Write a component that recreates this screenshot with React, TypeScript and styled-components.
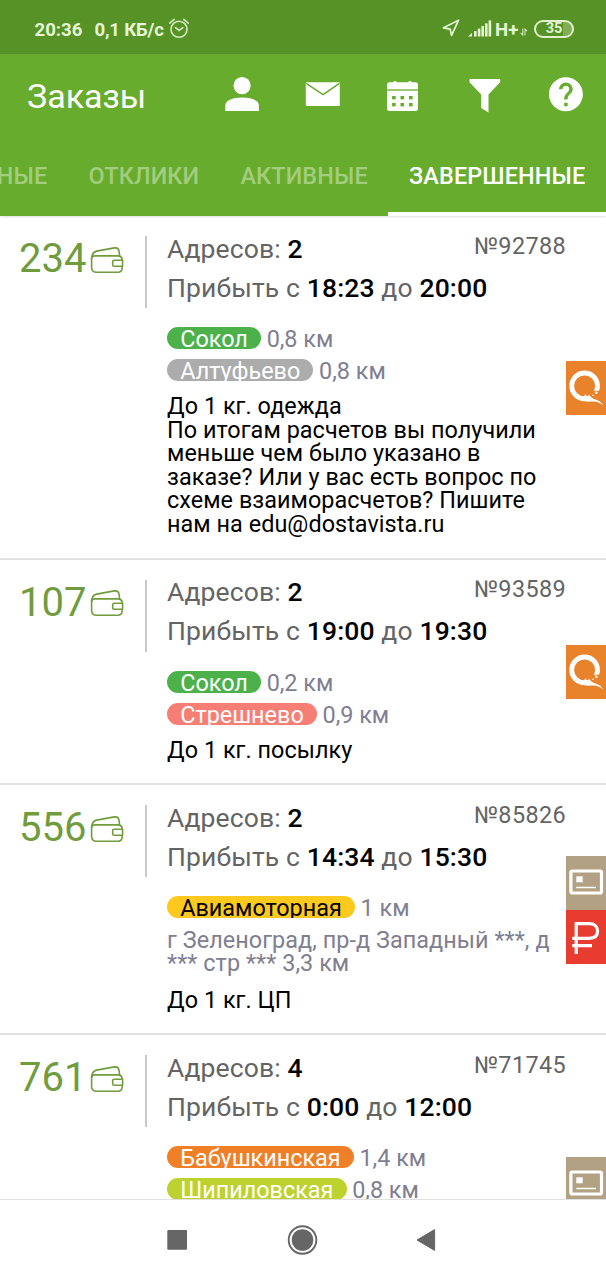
import React from 'react';
import styled, { createGlobalStyle } from 'styled-components';

const GlobalStyle = createGlobalStyle`
  * { box-sizing: border-box; }
  body { margin: 0; background: #fff; }
  svg { display: block; flex: none; }
`;

const Screen = styled.div`
  width: 606px;
  height: 1280px;
  overflow: hidden;
  display: flex;
  flex-direction: column;
  background: #fff;
  font-family: Roboto, 'Noto Sans', sans-serif;
`;

/* ---------- status bar ---------- */

const StatusBar = styled.div`
  flex: none;
  height: 54px;
  padding: 6px 32px 0 34.5px;
  display: flex;
  align-items: center;
  background: #579227;
  color: #e4f6d3;
  font-size: 18.6px;
  font-weight: 700;
  line-height: 22px;
`;

const Clock = styled.span`
  width: 60px;
`;

const Speed = styled.span`
  width: 74.5px;
  white-space: nowrap;
  letter-spacing: -0.2px;
`;

const StatusRight = styled.div`
  margin-left: auto;
  display: flex;
  align-items: center;
`;

const Network = styled.span`
  margin-left: 3.5px;
  width: 25px;
`;

const Battery = styled.div`
  margin: -3px 0 0 6px;
  width: 40px;
  height: 18px;
  border: 2px solid #dff2cd;
  border-radius: 9px;
  display: flex;
  align-items: center;
  justify-content: center;
  font-size: 14.5px;
  line-height: 14px;
  padding-top: 1px;
  background: linear-gradient(90deg, transparent 0 27px, #7fae56 27px);
  background-clip: padding-box;
`;

/* ---------- app bar ---------- */

const Header = styled.header`
  flex: none;
  height: 162px;
  background: #67ac2c;
  color: #fff;
  display: flex;
  flex-direction: column;
  box-shadow: 0 1px 2px rgba(0, 0, 0, 0.12);
`;

const AppBar = styled.div`
  height: 82px;
  display: flex;
  align-items: center;
`;

const Title = styled.h1`
  margin: 0 0 -2px;
  padding-left: 27px;
  width: 202px;
  font-size: 34px;
  font-weight: 400;
  line-height: 40px;
`;

const Action = styled.div`
  width: 80.8px;
  display: flex;
  justify-content: center;
`;

const Tabs = styled.nav`
  height: 80px;
  display: flex;
  justify-content: flex-end;
  overflow: hidden;
`;

const Tab = styled.div<{ $active?: boolean }>`
  flex: none;
  display: flex;
  align-items: center;
  padding: 4px 20.6px 0;
  border-bottom: 4px solid ${p => (p.$active ? '#fff' : 'transparent')};
  color: ${p => (p.$active ? '#fff' : '#a3cd7e')};
  font-size: 23.4px;
  font-weight: 500;
  letter-spacing: 0.15px;
`;

/* ---------- order list ---------- */

const List = styled.main`
  flex: 1;
  min-height: 0;
  overflow: hidden;
`;

const OrderRow = styled.article<{ $minHeight?: number }>`
  display: grid;
  grid-template-columns: 145px 2px 1fr 40px;
  min-height: ${p => p.$minHeight ?? 0}px;
  background: linear-gradient(#e2e2e2, #e2e2e2) bottom / 100% 2px no-repeat;
`;

const Price = styled.div`
  padding: 19px 0 0 19px;
  display: flex;
  align-items: flex-start;
  gap: 4px;
  color: #719c3e;
  font-size: 40px;
  line-height: 48px;

  svg { margin-top: 11.5px; }
`;

const Separator = styled.div`
  margin-top: 20px;
  height: 72px;
  width: 1.5px;
  background: #c9c9c9;
`;

const Details = styled.div`
  padding: 12.6px 0 23px 20px;
  min-width: 0;
`;

const HeadLine = styled.div`
  display: flex;
  justify-content: space-between;
  height: 39.3px;
  line-height: 39.3px;
  font-size: 26.5px;
  letter-spacing: 0.13px;
  color: #646464;
  white-space: pre;

  b { font-weight: 500; color: #000; }
`;

const OrderNumber = styled.span`
  margin-top: -2px;
  font-size: 23.4px;
  letter-spacing: 0.38px;
`;

const Stops = styled.div`
  margin-top: 19.8px;
  display: flex;
  flex-direction: column;
  gap: 10px;
`;

const Stop = styled.div`
  height: 22px;
  display: flex;
  align-items: flex-start;
  gap: 5.6px;
  font-size: 23.4px;
  line-height: 25px;
  color: #807e90;
`;

const Station = styled.span<{ $bg: string; $dark?: boolean }>`
  height: 22px;
  padding: 0 13.2px;
  border-radius: 11px;
  overflow: hidden;
  background: ${p => p.$bg};
  color: ${p => (p.$dark ? '#000' : '#fff')};
`;

const Address = styled.div`
  margin-bottom: -1.2px;
  padding-top: 0.6px;
  font-size: 23.4px;
  line-height: 23.6px;
  letter-spacing: 0.06px;
  white-space: pre-line;
  color: #807e90;
`;

const Note = styled.p`
  margin: 14px 0 0;
  font-size: 23.4px;
  line-height: 23.6px;
  letter-spacing: 0.05px;
  white-space: pre-line;
  color: #000;
`;

const Badges = styled.div`
  align-self: center;
  display: flex;
  flex-direction: column;
`;

const Badge = styled.div<{ $bg: string }>`
  height: 54px;
  background: ${p => p.$bg};
`;

/* ---------- system navigation ---------- */

const NavBar = styled.footer`
  flex: none;
  height: 81px;
  padding: 0 0 0 157px;
  display: flex;
  align-items: center;
  gap: 85px;
  border-top: 1px solid #e0e0e0;
  background: #fff;
`;

/* ---------- icons ---------- */

const RaisedSvg = styled.svg`
  margin-top: -4px;
`;

const AlarmIcon = () => (
  <RaisedSvg width="20" height="21" viewBox="0 0 20 21" fill="none" stroke="#d5ecbf" strokeWidth="1.6">
    <circle cx="10" cy="11.3" r="8" />
    <path d="M6.6 9.6 10 12.4l3.8-2.8M.8 5.2 5.2 1.4M19.2 5.2l-4.4-3.8" strokeLinecap="round" />
  </RaisedSvg>
);

const LocationIcon = () => (
  <RaisedSvg width="18" height="18" viewBox="0 0 18 18" fill="none" stroke="#e4f6d3" strokeWidth="1.7" strokeLinejoin="round">
    <path d="M16.6 1.2 1.4 8.8l6.8 1.4 1.4 6.2z" />
  </RaisedSvg>
);

const SignalSvg = styled.svg`
  margin: -3px 0 0 8px;
`;

const SignalIcon = () => (
  <SignalSvg width="24" height="17" viewBox="0 0 24 17" fill="#e4f6d3">
    <path d="M0 16.5 4 13v3.5z" />
    <rect x="6" y="11" width="2.6" height="5.5" />
    <rect x="9.8" y="8.6" width="2.6" height="7.9" />
    <rect x="13.4" y="6" width="2.6" height="10.5" />
    <rect x="17" y="3.4" width="2.6" height="13.1" />
    <rect x="20.6" y=".4" width="2.6" height="16.1" />
  </SignalSvg>
);

const DataSvg = styled.svg`
  margin-top: 4px;
`;

const DataIcon = () => (
  <DataSvg width="8" height="8" viewBox="0 0 8 8" fill="none" stroke="#cfe8b8" strokeWidth="1.1">
    <path d="M2.8.5v6.5L.6 4.8M5 7.6V1.2l2.2 2" />
  </DataSvg>
);

const PersonIcon = () => (
  <svg width="48" height="48" viewBox="0 0 48 48" fill="#fff">
    <circle cx="24.1" cy="14.7" r="8.6" />
    <path d="M7.3 40v-5.6c0-4.8 7-8 16.8-8s16.8 3.2 16.8 8V40z" />
  </svg>
);

const MailIcon = () => (
  <svg width="48" height="48" viewBox="0 0 48 48">
    <rect x="6.8" y="11.2" width="34" height="23.8" rx="1" fill="#fff" />
    <path d="M7.2 12.4 24.1 23.6 40.4 12.4" fill="none" stroke="#67ac2c" strokeWidth="1.5" />
  </svg>
);

const CalendarIcon = () => (
  <svg width="48" height="48" viewBox="0 0 48 48">
    <rect x="7" y="11.3" width="31" height="28.7" rx="2.5" fill="#fff" />
    <rect x="13.2" y="10" width="3.6" height="4" rx="1.6" fill="#fff" />
    <rect x="28.2" y="10" width="3.6" height="4" rx="1.6" fill="#fff" />
    <path d="M7 19h31" stroke="#67ac2c" strokeWidth="1.3" />
    <g fill="#67ac2c">
      {[25, 32].map(y => [12.1, 20.5, 29].map(x => <rect key={`${x}-${y}`} x={x} y={y} width="3.6" height="3.4" />))}
    </g>
  </svg>
);

const FilterIcon = () => (
  <svg width="48" height="48" viewBox="0 0 48 48" fill="#fff">
    <path d="M8.5 8h30.7v3.2L27.5 23.6v17.8L20.2 37V23.6L8.5 11.2z" />
  </svg>
);

const HelpIcon = () => (
  <svg width="48" height="48" viewBox="0 0 48 48" fill="#fff">
    <path
      transform="translate(3.5 2.9) scale(1.7)"
      d="M12 2C6.48 2 2 6.48 2 12s4.48 10 10 10 10-4.48 10-10S17.52 2 12 2zm1 17h-2v-2h2v2zm2.07-7.75l-.9.92C13.45 12.9 13 13.5 13 15h-2v-.5c0-1.1.45-2.1 1.17-2.83l1.24-1.26c.37-.36.59-.86.59-1.41 0-1.1-.9-2-2-2s-2 .9-2 2H8c0-2.21 1.79-4 4-4s4 1.79 4 4c0 .88-.36 1.68-.93 2.25z"
    />
  </svg>
);

const WalletIcon = () => (
  <svg width="34" height="27" viewBox="0 0 34 27" fill="none" stroke="#719c3e" strokeWidth="1.6" strokeLinejoin="round">
    <path d="M1.6 12v8.2c0 3.2 1.8 5 5 5h21c3 0 4.6-1.7 4.6-4.7v-1.3M32.2 13.2c0-2.8-1.5-4.3-4.6-4.3H4.8c-2 0-3.2 1.2-3.2 3.1" />
    <path d="M1.6 12c0-4.8 1.4-7 5-7.9L24.4.9c2.6-.4 4.3 1 4.7 3.500l.5 4.600" />
    <path d="M32.600 13.200h-8.600c-.8 0-1.300.5-1.300 1.300v3.400c0 .8.5 1.300 1.300 1.300h8.600z" />
  </svg>
);

const QiwiIcon = () => (
  <svg width="40" height="54" viewBox="0 0 40 54">
    <circle cx="18.600" cy="24.900" r="12.900" fill="none" stroke="#fff" strokeWidth="4.800" />
    <path d="M22 33.500 27 30 34.800 29.500 36 38 27 38z" fill="#e8832c" />
    <path d="M15 39.500 16 35.500c2 0 3-.6 3-2.500 1 1.600 2 2.400 3.600 2.800l.4-2.300c1.300 2.700 3.200 4 6.500 5 3.600 1.200 6.200 3 7.900 6-3.400-2.600-6.400-3.900-10.200-3.900-4.500 0-8.700.4-12.200-1.100z" fill="#fff" />
    <circle cx="30.300" cy="31.800" r="1.300" fill="#fff" />
    <circle cx="27" cy="34.200" r=".8" fill="#fff" />
  </svg>
);

const CardIcon = () => (
  <svg width="40" height="54" viewBox="0 0 40 54">
    <rect x="4.9" y="15" width="30.6" height="22" rx="1.5" fill="none" stroke="#fff" strokeWidth="3.2" />
    <rect x="10.300" y="20.300" width="6.400" height="6" fill="#fff" />
    <path d="M10.300 31.500H30" stroke="#fff" strokeWidth="1.500" />
  </svg>
);

const RubleIcon = () => (
  <svg width="40" height="54" viewBox="0 0 40 54" fill="none" stroke="#fff" strokeWidth="3.200">
    <path d="M10.200 44V13.600h12.800c5.500 0 8.600 3 8.600 7.400 0 4.700-3.200 7.300-8.600 7.300H6.200M6.200 35.700H26" />
  </svg>
);

const BADGES = {
  qiwi: { bg: '#e8832c', Icon: QiwiIcon },
  card: { bg: '#b3a183', Icon: CardIcon },
  ruble: { bg: '#e83c30', Icon: RubleIcon },
};

/* ---------- data ---------- */

interface Order {
  price: number;
  number: string;
  addresses: number;
  from: string;
  to: string;
  stops: { name: string; distance: string; bg: string; dark?: boolean }[];
  address?: string;
  note?: string;
  badges: (keyof typeof BADGES)[];
  minHeight?: number;
}

const orders: Order[] = [
  {
    price: 234, number: '92788', addresses: 2, from: '18:23', to: '20:00',
    stops: [
      { name: 'Сокол', distance: '0,8 км', bg: '#4cb04b' },
      { name: 'Алтуфьево', distance: '0,8 км', bg: '#acacac' },
    ],
    note: 'До 1 кг. одежда\nПо итогам расчетов вы получили\nменьше чем было указано в\nзаказе? Или у вас есть вопрос по\nсхеме взаиморасчетов? Пишите\nнам на edu@dostavista.ru',
    badges: ['qiwi'],
  },
  {
    price: 107, number: '93589', addresses: 2, from: '19:00', to: '19:30',
    stops: [
      { name: 'Сокол', distance: '0,2 км', bg: '#4cb04b' },
      { name: 'Стрешнево', distance: '0,9 км', bg: '#f77e75' },
    ],
    note: 'До 1 кг. посылку',
    badges: ['qiwi'],
  },
  {
    price: 556, number: '85826', addresses: 2, from: '14:34', to: '15:30',
    stops: [{ name: 'Авиамоторная', distance: '1 км', bg: '#fec91d', dark: true }],
    address: 'г Зеленоград, пр-д Западный ***, д\n*** стр *** 3,3 км',
    note: 'До 1 кг. ЦП',
    badges: ['card', 'ruble'],
  },
  {
    price: 761, number: '71745', addresses: 4, from: '0:00', to: '12:00',
    stops: [
      { name: 'Бабушкинская', distance: '1,4 км', bg: '#f08028' },
      { name: 'Шипиловская', distance: '0,8 км', bg: '#bed22f' },
    ],
    badges: ['card'],
    minHeight: 298,
  },
];

const OrderItem = ({ order }: { order: Order }) => (
  <OrderRow $minHeight={order.minHeight}>
    <Price>
      {order.price}
      <WalletIcon />
    </Price>
    <Separator />
    <Details>
      <HeadLine>
        <span>Адресов: <b>{order.addresses}</b></span>
        <OrderNumber>№{order.number}</OrderNumber>
      </HeadLine>
      <HeadLine>
        <span>Прибыть с <b>{order.from}</b> до <b>{order.to}</b></span>
      </HeadLine>
      <Stops>
        {order.stops.map(s => (
          <Stop key={s.name}>
            <Station $bg={s.bg} $dark={s.dark}>{s.name}</Station>
            {s.distance}
          </Stop>
        ))}
        {order.address && <Address>{order.address}</Address>}
      </Stops>
      {order.note && <Note>{order.note}</Note>}
    </Details>
    <Badges>
      {order.badges.map(kind => {
        const { bg, Icon } = BADGES[kind];
        return <Badge key={kind} $bg={bg}><Icon /></Badge>;
      })}
    </Badges>
  </OrderRow>
);

export default function App() {
  return (
    <Screen>
      <GlobalStyle />
      <StatusBar>
        <Clock>20:36</Clock>
        <Speed>0,1 КБ/с</Speed>
        <AlarmIcon />
        <StatusRight>
          <LocationIcon />
          <SignalIcon />
          <Network>H+</Network>
          <DataIcon />
          <Battery>35</Battery>
        </StatusRight>
      </StatusBar>
      <Header>
        <AppBar>
          <Title>Заказы</Title>
          <Action><PersonIcon /></Action>
          <Action><MailIcon /></Action>
          <Action><CalendarIcon /></Action>
          <Action><FilterIcon /></Action>
          <Action><HelpIcon /></Action>
        </AppBar>
        <Tabs>
          <Tab>ДОСТУПНЫЕ</Tab>
          <Tab>ОТКЛИКИ</Tab>
          <Tab>АКТИВНЫЕ</Tab>
          <Tab $active>ЗАВЕРШЕННЫЕ</Tab>
        </Tabs>
      </Header>
      <List>
        {orders.map(o => <OrderItem key={o.number} order={o} />)}
      </List>
      <NavBar>
        <svg width="40" height="40" viewBox="0 0 40 40" fill="#666">
          <rect x="10.3" y="10" width="19.7" height="19.7" rx="1" />
        </svg>
        <svg width="40" height="40" viewBox="0 0 40 40">
          <circle cx="20.5" cy="20" r="13.8" fill="none" stroke="#666" strokeWidth="1.9" />
          <circle cx="20.5" cy="20" r="10.8" fill="#666" />
        </svg>
        <svg width="40" height="40" viewBox="0 0 40 40" fill="#666" stroke="#666" strokeLinejoin="round">
          <path d="M10 20 27.6 9.6v20.8z" />
        </svg>
      </NavBar>
    </Screen>
  );
}
